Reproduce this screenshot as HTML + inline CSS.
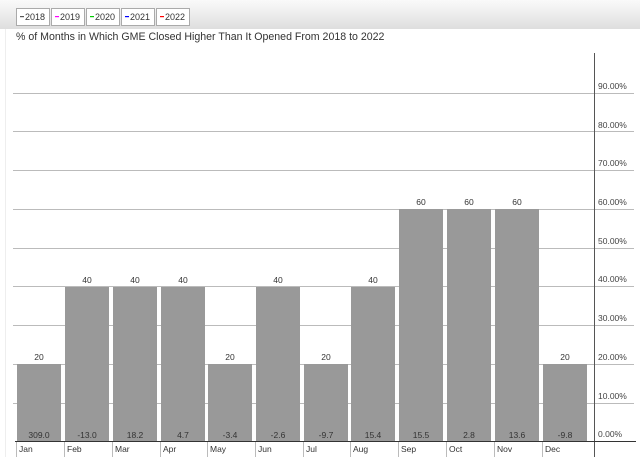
<!DOCTYPE html>
<html><head><style>
body{margin:0;width:640px;height:457px;background:#fff;overflow:hidden;font-family:"Liberation Sans",sans-serif;}
</style></head><body>
<svg width="640" height="457" xmlns="http://www.w3.org/2000/svg" font-family="Liberation Sans, sans-serif">
<defs><linearGradient id="g" x1="0" y1="0" x2="0" y2="1"><stop offset="0" stop-color="#fafafa"/><stop offset="1" stop-color="#dedede"/></linearGradient></defs>
<rect x="0" y="0" width="640" height="29" fill="url(#g)"/>
<line x1="5.5" y1="29" x2="5.5" y2="457" stroke="#eee"/>
<g font-size="9" fill="#333">
<rect x="16.5" y="8.5" width="33" height="17" fill="#fff" stroke="#aaa"/><rect x="20" y="16" width="4" height="1.2" fill="#555"/><text x="25" y="20">2018</text>
<rect x="51.5" y="8.5" width="33" height="17" fill="#fff" stroke="#aaa"/><rect x="55" y="16" width="4" height="1.2" fill="#f0f"/><text x="60" y="20">2019</text>
<rect x="86.5" y="8.5" width="33" height="17" fill="#fff" stroke="#aaa"/><rect x="90" y="16" width="4" height="1.2" fill="#0c0"/><text x="95" y="20">2020</text>
<rect x="121.5" y="8.5" width="33" height="17" fill="#fff" stroke="#aaa"/><rect x="125" y="16" width="4" height="1.2" fill="#00f"/><text x="130" y="20">2021</text>
<rect x="156.5" y="8.5" width="33" height="17" fill="#fff" stroke="#aaa"/><rect x="160" y="16" width="4" height="1.2" fill="#f00"/><text x="165" y="20">2022</text>
</g>
<text x="16" y="40" font-size="10.6" fill="#333">% of Months in Which GME Closed Higher Than It Opened From 2018 to 2022</text>
<g stroke="#bbb" stroke-width="1">
<line x1="13" y1="93.5" x2="634" y2="93.5"/><line x1="13" y1="131.5" x2="634" y2="131.5"/><line x1="13" y1="170.5" x2="634" y2="170.5"/><line x1="13" y1="209.5" x2="634" y2="209.5"/><line x1="13" y1="248.5" x2="634" y2="248.5"/><line x1="13" y1="286.5" x2="634" y2="286.5"/><line x1="13" y1="325.5" x2="634" y2="325.5"/><line x1="13" y1="364.5" x2="634" y2="364.5"/><line x1="13" y1="403.5" x2="634" y2="403.5"/>
</g>
<g font-size="8.5" fill="#444">
<text x="598" y="89">90.00%</text><text x="598" y="128">80.00%</text><text x="598" y="166">70.00%</text><text x="598" y="205">60.00%</text><text x="598" y="244">50.00%</text><text x="598" y="282">40.00%</text><text x="598" y="321">30.00%</text><text x="598" y="360">20.00%</text><text x="598" y="399">10.00%</text><text x="598" y="437">0.00%</text>
</g>
<g fill="#999">
<rect x="17" y="364" width="44" height="77"/><rect x="65" y="287" width="44" height="154"/><rect x="113" y="287" width="44" height="154"/><rect x="161" y="287" width="44" height="154"/><rect x="208" y="364" width="44" height="77"/><rect x="256" y="287" width="44" height="154"/><rect x="304" y="364" width="44" height="77"/><rect x="351" y="287" width="44" height="154"/><rect x="399" y="209" width="44" height="232"/><rect x="447" y="209" width="44" height="232"/><rect x="495" y="209" width="44" height="232"/><rect x="543" y="364" width="44" height="77"/>
</g>
<g font-size="8.5" fill="#333" text-anchor="middle">
<text x="39" y="360">20</text><text x="87" y="283">40</text><text x="135" y="283">40</text><text x="183" y="283">40</text><text x="230" y="360">20</text><text x="278" y="283">40</text><text x="326" y="360">20</text><text x="373" y="283">40</text><text x="421" y="205">60</text><text x="469" y="205">60</text><text x="517" y="205">60</text><text x="565" y="360">20</text>
<text x="39" y="438">309.0</text><text x="87" y="438">-13.0</text><text x="135" y="438">18.2</text><text x="183" y="438">4.7</text><text x="230" y="438">-3.4</text><text x="278" y="438">-2.6</text><text x="326" y="438">-9.7</text><text x="373" y="438">15.4</text><text x="421" y="438">15.5</text><text x="469" y="438">2.8</text><text x="517" y="438">13.6</text><text x="565" y="438">-9.8</text>
</g>
<line x1="594.5" y1="53" x2="594.5" y2="457" stroke="#555"/>
<line x1="15" y1="441.5" x2="636" y2="441.5" stroke="#333"/>
<g stroke="#bbb"><line x1="16.5" y1="442" x2="16.5" y2="457"/><line x1="64.5" y1="442" x2="64.5" y2="457"/><line x1="112.5" y1="442" x2="112.5" y2="457"/><line x1="160.5" y1="442" x2="160.5" y2="457"/><line x1="207.5" y1="442" x2="207.5" y2="457"/><line x1="255.5" y1="442" x2="255.5" y2="457"/><line x1="303.5" y1="442" x2="303.5" y2="457"/><line x1="350.5" y1="442" x2="350.5" y2="457"/><line x1="398.5" y1="442" x2="398.5" y2="457"/><line x1="446.5" y1="442" x2="446.5" y2="457"/><line x1="494.5" y1="442" x2="494.5" y2="457"/><line x1="542.5" y1="442" x2="542.5" y2="457"/></g>
<g font-size="8.5" fill="#333">
<text x="19" y="452">Jan</text><text x="67" y="452">Feb</text><text x="115" y="452">Mar</text><text x="163" y="452">Apr</text><text x="210" y="452">May</text><text x="258" y="452">Jun</text><text x="306" y="452">Jul</text><text x="353" y="452">Aug</text><text x="401" y="452">Sep</text><text x="449" y="452">Oct</text><text x="497" y="452">Nov</text><text x="545" y="452">Dec</text>
</g>
</svg>
</body></html>
